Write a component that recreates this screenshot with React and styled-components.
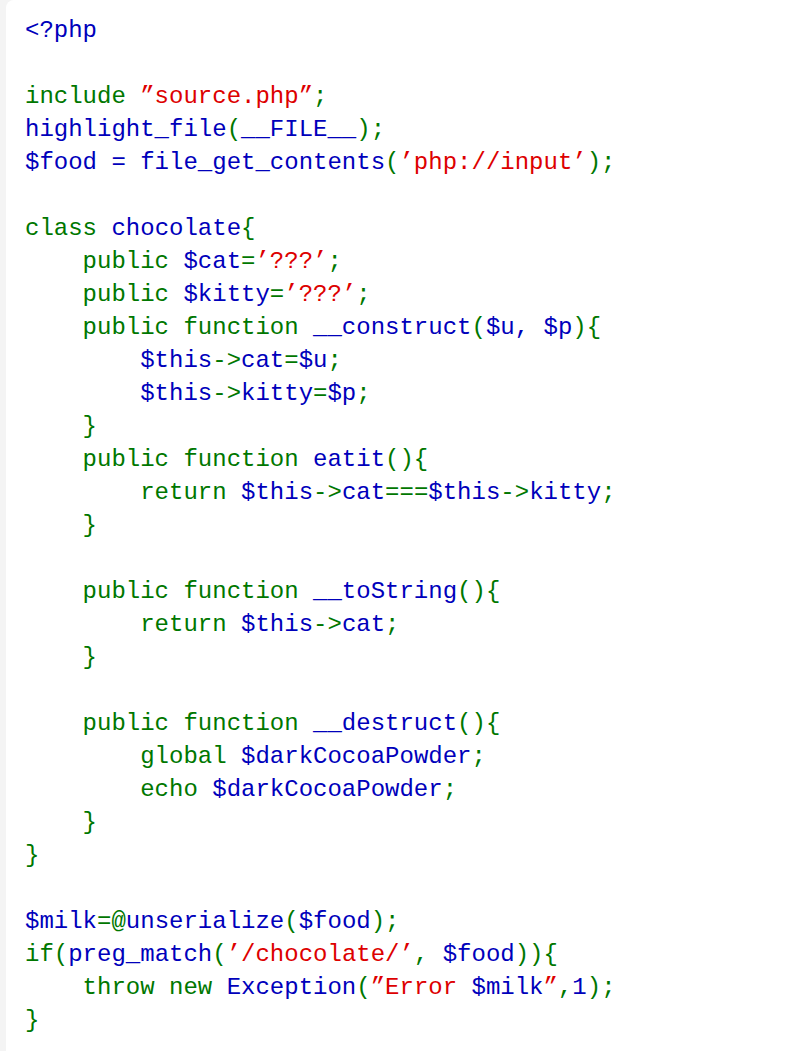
import React from "react";
import styled, { createGlobalStyle } from "styled-components";

const GlobalStyle = createGlobalStyle`
  html, body {
    margin: 0;
    padding: 0;
    background: #f4f4f4;
  }
`;

const G = "#007700";
const B = "#0000bb";
const R = "#dd0000";

const lines = [
  [[B, "<?php"]],
  [],
  [[G, "include "], [R, "”source.php”"], [G, ";"]],
  [[B, "highlight_file"], [G, "("], [B, "__FILE__"], [G, ");"]],
  [[B, "$food = file_get_contents"], [G, "("], [R, "’php://input’"], [G, ");"]],
  [],
  [[G, "class "], [B, "chocolate"], [G, "{"]],
  [[G, "    public "], [B, "$cat"], [G, "="], [R, "’???’"], [G, ";"]],
  [[G, "    public "], [B, "$kitty"], [G, "="], [R, "’???’"], [G, ";"]],
  [[G, "    public function "], [B, "__construct"], [G, "("], [B, "$u, $p"], [G, "){"]],
  [[B, "        $this"], [G, "->"], [B, "cat"], [G, "="], [B, "$u"], [G, ";"]],
  [[B, "        $this"], [G, "->"], [B, "kitty"], [G, "="], [B, "$p"], [G, ";"]],
  [[G, "    }"]],
  [[G, "    public function "], [B, "eatit"], [G, "(){"]],
  [[G, "        return "], [B, "$this"], [G, "->"], [B, "cat"], [G, "==="], [B, "$this"], [G, "->"], [B, "kitty"], [G, ";"]],
  [[G, "    }"]],
  [],
  [[G, "    public function "], [B, "__toString"], [G, "(){"]],
  [[G, "        return "], [B, "$this"], [G, "->"], [B, "cat"], [G, ";"]],
  [[G, "    }"]],
  [],
  [[G, "    public function "], [B, "__destruct"], [G, "(){"]],
  [[G, "        global "], [B, "$darkCocoaPowder"], [G, ";"]],
  [[G, "        echo "], [B, "$darkCocoaPowder"], [G, ";"]],
  [[G, "    }"]],
  [[G, "}"]],
  [],
  [[B, "$milk"], [G, "=@"], [B, "unserialize"], [G, "("], [B, "$food"], [G, ");"]],
  [[G, "if("], [B, "preg_match"], [G, "("], [R, "’/chocolate/’"], [G, ", "], [B, "$food"], [G, ")){"]],
  [[G, "    throw new "], [B, "Exception"], [G, "("], [R, "”Error "], [B, "$milk"], [R, "”"], [G, ","], [B, "1"], [G, ");"]],
  [[G, "}"]],
];

const App = () => {
  return (
    <Page>
      <GlobalStyle />
      <Panel>
        <Code>
          {lines.map((line, i) => (
            <Line key={i}>
              {line.length === 0
                ? "\u00a0"
                : line.map(([c, t], j) => (
                    <Tok key={j} $c={c}>
                      {t}
                    </Tok>
                  ))}
            </Line>
          ))}
        </Code>
      </Panel>
    </Page>
  );
};

export default App;

const Page = styled.div`
  padding-left: 6px;
  min-height: 1051px;
  display: flex;
`;

const Panel = styled.div`
  flex: 1;
  background: #ffffff;
  border-top-left-radius: 8px;
  padding: 14px 0 0 19px;
`;

const Code = styled.code`
  display: block;
  font-family: "Liberation Mono", "Noto Sans CJK SC", monospace;
  font-size: 24px;
  line-height: 33px;
  white-space: pre;
`;

const Line = styled.div`
  height: 33px;
`;

const Tok = styled.span`
  color: ${(props) => props.$c};
`;
